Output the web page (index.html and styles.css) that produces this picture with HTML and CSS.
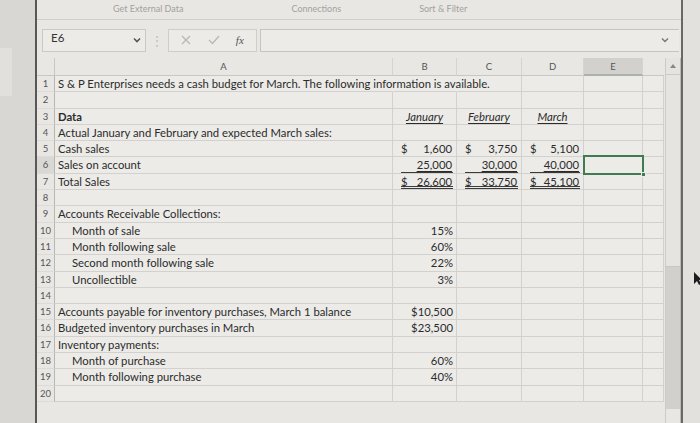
FILE: index.html
```html
<!DOCTYPE html>
<html>
<head>
<meta charset="utf-8">
<link rel="stylesheet" href="styles.css">
</head>
<body>
<div class="screen">
  <div class="leftpane"><div class="leftpanel"></div></div>
  <div class="app">
    <div class="ribbon">
      <span class="grp g1">Get External Data</span>
      <span class="grp g2">Connections</span>
      <span class="grp g3">Sort &amp; Filter</span>
    </div>
    <div class="fbar">
      <div class="namebox"><span>E6</span>
        <svg class="chev" width="8" height="6" viewBox="0 0 8 6"><path d="M1 1.5 L4 4.5 L7 1.5" fill="none" stroke="#555" stroke-width="1.6"/></svg>
      </div>
      <div class="dots">&#8942;</div>
      <div class="fbtns">
        <svg width="10" height="10" viewBox="0 0 10 10"><path d="M1 1 L9 9 M9 1 L1 9" stroke="#b9b7b3" stroke-width="1.3"/></svg>
        <svg width="12" height="10" viewBox="0 0 12 10"><path d="M1 5 L4.5 8.5 L11 1" fill="none" stroke="#b9b7b3" stroke-width="1.3"/></svg>
        <span class="fx">fx</span>
      </div>
      <div class="finput">
        <svg class="chev" width="8" height="6" viewBox="0 0 8 6"><path d="M1 1.5 L4 4.5 L7 1.5" fill="none" stroke="#777" stroke-width="1.4"/></svg>
      </div>
    </div>
    <div class="sheetwrap">
      <div class="sheet">
        <div class="hd corner"></div><div class="hd">A</div><div class="hd">B</div><div class="hd">C</div><div class="hd">D</div><div class="hd sel">E</div><div class="hd last"></div>

        <div class="rn">1</div><div class="c ov nr">S &amp; P Enterprises needs a cash budget for March. The following information is available.</div><div class="c nr"></div><div class="c"></div><div class="c"></div><div class="c"></div><div class="c"></div>
        <div class="rn">2</div><div class="c"></div><div class="c"></div><div class="c"></div><div class="c"></div><div class="c"></div><div class="c"></div>
        <div class="rn">3</div><div class="c b">Data</div><div class="c ctr"><span class="mh">January</span></div><div class="c ctr"><span class="mh">February</span></div><div class="c ctr"><span class="mh">March</span></div><div class="c"></div><div class="c"></div>
        <div class="rn">4</div><div class="c">Actual January and February and expected March sales:</div><div class="c"></div><div class="c"></div><div class="c"></div><div class="c"></div><div class="c"></div>
        <div class="rn">5</div><div class="c">Cash sales</div><div class="c acc"><span>$</span><span>1,600</span></div><div class="c acc"><span>$</span><span>3,750</span></div><div class="c acc"><span>$</span><span>5,100</span></div><div class="c"></div><div class="c"></div>
        <div class="rn rsel">6</div><div class="c">Sales on account</div><div class="c acc u1"><span></span><span>25,000</span></div><div class="c acc u1"><span></span><span>30,000</span></div><div class="c acc u1"><span></span><span>40,000</span></div><div class="c active"><i class="handle"></i></div><div class="c"></div>
        <div class="rn">7</div><div class="c">Total Sales</div><div class="c acc u2"><span>$</span><span>26,600</span></div><div class="c acc u2"><span>$</span><span>33,750</span></div><div class="c acc u2"><span>$</span><span>45,100</span></div><div class="c"></div><div class="c"></div>
        <div class="rn">8</div><div class="c"></div><div class="c"></div><div class="c"></div><div class="c"></div><div class="c"></div><div class="c"></div>
        <div class="rn">9</div><div class="c">Accounts Receivable Collections:</div><div class="c"></div><div class="c"></div><div class="c"></div><div class="c"></div><div class="c"></div>
        <div class="rn">10</div><div class="c ind">Month of sale</div><div class="c r">15%</div><div class="c"></div><div class="c"></div><div class="c"></div><div class="c"></div>
        <div class="rn">11</div><div class="c ind">Month following sale</div><div class="c r">60%</div><div class="c"></div><div class="c"></div><div class="c"></div><div class="c"></div>
        <div class="rn">12</div><div class="c ind">Second month following sale</div><div class="c r">22%</div><div class="c"></div><div class="c"></div><div class="c"></div><div class="c"></div>
        <div class="rn">13</div><div class="c ind">Uncollectible</div><div class="c r">3%</div><div class="c"></div><div class="c"></div><div class="c"></div><div class="c"></div>
        <div class="rn">14</div><div class="c"></div><div class="c"></div><div class="c"></div><div class="c"></div><div class="c"></div><div class="c"></div>
        <div class="rn">15</div><div class="c">Accounts payable for inventory purchases, March 1 balance</div><div class="c r">$10,500</div><div class="c"></div><div class="c"></div><div class="c"></div><div class="c"></div>
        <div class="rn">16</div><div class="c">Budgeted inventory purchases in March</div><div class="c r">$23,500</div><div class="c"></div><div class="c"></div><div class="c"></div><div class="c"></div>
        <div class="rn">17</div><div class="c">Inventory payments:</div><div class="c"></div><div class="c"></div><div class="c"></div><div class="c"></div><div class="c"></div>
        <div class="rn">18</div><div class="c ind">Month of purchase</div><div class="c r">60%</div><div class="c"></div><div class="c"></div><div class="c"></div><div class="c"></div>
        <div class="rn">19</div><div class="c ind">Month following purchase</div><div class="c r">40%</div><div class="c"></div><div class="c"></div><div class="c"></div><div class="c"></div>
        <div class="rn">20</div><div class="c"></div><div class="c"></div><div class="c"></div><div class="c"></div><div class="c"></div><div class="c"></div>
      </div>
      <div class="vscroll">
        <div class="uparrow"><svg width="6" height="4" viewBox="0 0 6 4"><path d="M0 4 L3 0 L6 4 Z" fill="#8a8884"/></svg></div>
        <div class="track"></div>
        <div class="thumb"></div>
      </div>
    </div>
  </div>
  <div class="rightpane">
    <svg class="cursor" width="8" height="14" viewBox="0 0 8 14"><path d="M0 0 L0 12 L3 9 L5 13 L7 12 L5 8 L8 8 Z" fill="#1d1d1d"/></svg>
  </div>
</div>
</body>
</html>
```
FILE: styles.css
```css
* { box-sizing: border-box; }
html, body { margin: 0; padding: 0; }
body {
  width: 700px; height: 423px; overflow: hidden;
  background: #e4e2df;
  font-family: Lato, "Open Sans", sans-serif;
  color: #2b2b2b;
}
.screen { display: flex; height: 423px; }
.leftpane {
  width: 37px; flex: none;
  background: #d9d7d3;
  border-right: 2px solid #5a5855;
  padding-top: 48px;
}
.leftpanel { width: 12px; height: 48px; background: #e2e0dc; }
.app {
  width: 646px; flex: none;
  background: #e9e7e4;
  border-right: 2px solid #6a6865;
  display: flex; flex-direction: column;
}
.rightpane { flex: 1; background: #e3e1de; position: relative; }
.cursor { position: absolute; left: 11px; top: 272px; }

.ribbon {
  height: 20px;
  display: flex; align-items: flex-start;
  border-bottom: 1px solid #d0ceca;
}
.grp {
  font-size: 9px; line-height: 12px; color: #a3a19d;
  margin-top: 3px;
}
.g1 { margin-left: 76px; }
.g2 { margin-left: 108px; }
.g3 { margin-left: 78px; }

.fbar {
  height: 38px; display: flex; align-items: center;
  padding: 2px 0 0 5px;
}
.namebox {
  width: 104px; height: 23px;
  border: 1px solid #cbc9c5; background: #ecebe8;
  display: flex; justify-content: space-between; align-items: center;
  padding: 0 4px 0 8px;
  font-size: 11.5px; color: #333;
}
.namebox span { position: relative; top: -3px; }
.dots { width: 22px; text-align: center; color: #bdbbb7; font-size: 12px; }
.fbtns {
  width: 89px; height: 23px;
  border: 1px solid #cfcdc9; background: #ecebe8;
  display: flex; align-items: center; justify-content: space-around;
  padding: 0 4px;
}
.fx { font-family: "Liberation Serif", serif; font-style: italic; font-size: 11px; color: #555; }
.finput {
  flex: 1; height: 23px; margin-left: 3px; margin-right: 2px;
  border: 1px solid #c6c4c0; border-right: none; background: #ecebe8;
  display: flex; justify-content: flex-end; align-items: center; padding-right: 10px;
}

.sheetwrap { display: flex; flex: 1; }
.sheet {
  display: grid;
  grid-template-columns: 18px 338px 64px 65px 62px 59px 21px;
  grid-template-rows: 18px repeat(20, 16.3px);
  align-content: start;
  width: 627px;
}
.hd {
  font-size: 9.5px; color: #555;
  text-align: center; line-height: 18px;
  border-right: 1px solid #d6d4d0;
  border-bottom: 1px solid #c9c7c3;
  background: #e9e7e4;
}
.hd.corner { border-right: 1px solid #c9c7c3; }
.hd.sel { background: #d3d1cd; border-bottom: 2px solid #a9b3aa; }
.hd.last { border-right: none; }
.rn {
  font-size: 9.5px; color: #555;
  text-align: center; line-height: 16px;
  border-right: 1px solid #b8b6b2;
  border-bottom: 1px solid #dddbd7;
  background: #e9e7e4;
}
.rn.rsel { background: #dad8d4; }
.c {
  font-size: 11.3px; line-height: 15px;
  padding: 0 3px;
  border-right: 1px solid #d3d1cd;
  border-bottom: 1px solid #d3d1cd;
  background: #ecebe8;
  white-space: nowrap;
  position: relative;
}
.c.nr { border-right-color: #ecebe8; }
.c.ov { overflow: visible; z-index: 2; }
.c.b { font-weight: bold; }
.c.ind { padding-left: 17px; }
.c.r { text-align: right; }
.c.ctr { text-align: center; }
.mh { font-style: italic; text-decoration: underline; text-underline-offset: 2px; }
.acc { display: flex; justify-content: space-between; padding: 0 4px 0 8px; }
.u1 span:last-child { text-decoration: underline; text-underline-offset: 2px; }
.u1::after {
  content: ""; position: absolute; left: 8px; right: 3px; bottom: 0px;
  border-bottom: 1px solid #3a3a3a;
}
.u2::after {
  content: ""; position: absolute; left: 8px; right: 3px; bottom: 0px;
  border-bottom: 3px double #3a3a3a;
}
.active {
  border: 2px solid #427a52;
  margin: -2px -1px -1px -1px;
  z-index: 3;
}
.handle {
  position: absolute; right: -4px; bottom: -4px;
  width: 5px; height: 5px; background: #427a52; border: 1px solid #ecebe8;
}

.vscroll {
  width: 16px; margin-left: 1px;
  display: flex; flex-direction: column;
  border-left: 1px solid #cdcbc7;
  border-right: 1px solid #bdbbb7;
}
.uparrow {
  height: 17px; display: flex; align-items: center; justify-content: center;
  border-bottom: 1px solid #cdcbc7; background: #e6e4e1;
}
.track { height: 192px; background: #e6e4e1; border-bottom: 1px solid #c9c7c3; }
.thumb { flex: 1; background: #d2d0cc; margin-bottom: 14px; }
```
